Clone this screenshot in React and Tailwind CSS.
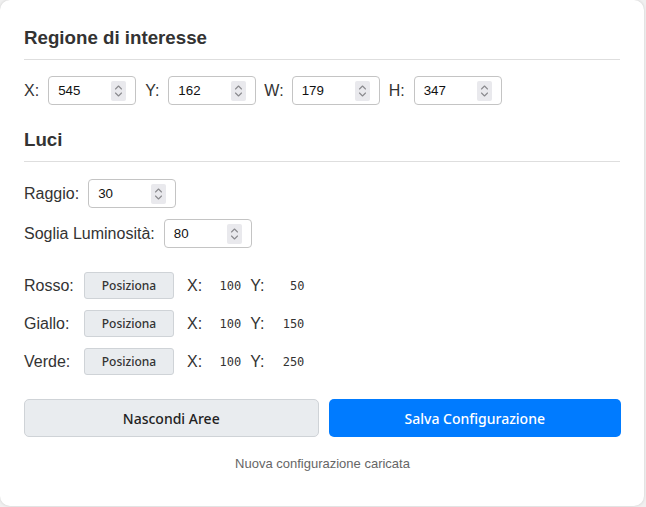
import React from "react";

function Spinner() {
  return (
    <div className="w-[15px] h-[20px] bg-[#e9e9ed] rounded-[2px] flex items-center justify-center">
      <svg width="9" height="14" viewBox="0 0 9 14" fill="none" stroke="#8a8a8e" strokeWidth="1.1" strokeLinecap="round" strokeLinejoin="round">
        <path d="M1.5 5 L4.5 2 L7.5 5" />
        <path d="M1.5 9 L4.5 12 L7.5 9" />
      </svg>
    </div>
  );
}

function NumInput({ value }) {
  return (
    <div className="w-[88px] h-[29px] border border-[#c4c4c4] rounded-[4px] flex items-center justify-between pl-[9px] pr-[9px] bg-white">
      <span className="text-[13.33px] text-[#111]" style={{ fontFamily: '"Liberation Sans", Arial, sans-serif' }}>{value}</span>
      <Spinner />
    </div>
  );
}

function Heading({ children }) {
  return (
    <div className="text-[18.72px] font-bold text-[#333] leading-[22px] pb-[10px] border-b border-[#dedede]">
      {children}
    </div>
  );
}

function LightRow({ label, x, y }) {
  return (
    <div className="flex items-center h-[27px]">
      <div className="w-[60px]">{label}</div>
      <button
        className="w-[90px] h-[27px] bg-[#e9ecef] border border-[#cfd3d7] rounded-[3px] text-[12px] font-medium text-[#333]"
        style={{ fontFamily: '"Noto Sans", sans-serif' }}
      >
        Posiziona
      </button>
      <span className="ml-[13px]">X:</span>
      <span className="w-[39px] text-right text-[12px] text-[#333]" style={{ fontFamily: '"DejaVu Sans Mono", monospace' }}>{x}</span>
      <span className="ml-[9px]">Y:</span>
      <span className="w-[40px] text-right text-[12px] text-[#333]" style={{ fontFamily: '"DejaVu Sans Mono", monospace' }}>{y}</span>
    </div>
  );
}

export default function App() {
  return (
    <div className="w-[646px] h-[507px] bg-[#f0f0f0] overflow-hidden">
      <div
        className="w-[644px] h-[506px] bg-white rounded-[10px] shadow-[0_0_3px_rgba(0,0,0,0.15)] px-[24px] pt-[27px] text-[16px] text-[#333]"
        style={{ fontFamily: '"Liberation Sans", Arial, sans-serif' }}
      >
        <Heading>Regione di interesse</Heading>
        <div className="flex items-center mt-[16px]">
          <span className="mr-[9px]">X:</span>
          <NumInput value="545" />
          <span className="ml-[9px] mr-[9px]">Y:</span>
          <NumInput value="162" />
          <span className="ml-[8px] mr-[8px]">W:</span>
          <NumInput value="179" />
          <span className="ml-[9px] mr-[9px]">H:</span>
          <NumInput value="347" />
        </div>

        <div className="mt-[24px]">
          <Heading>Luci</Heading>
        </div>
        <div className="flex flex-col gap-[11px] mt-[17px]">
          <div className="flex items-center">
            <span className="mr-[9px]">Raggio:</span>
            <NumInput value="30" />
          </div>
          <div className="flex items-center">
            <span className="mr-[9px]">Soglia Luminosità:</span>
            <NumInput value="80" />
          </div>
        </div>

        <div className="flex flex-col gap-[11px] mt-[24px]">
          <LightRow label="Rosso:" x="100" y="50" />
          <LightRow label="Giallo:" x="100" y="150" />
          <LightRow label="Verde:" x="100" y="250" />
        </div>

        <div className="flex gap-[10px] mt-[24px] w-[597px]">
          <button
            className="flex-1 h-[38px] bg-[#e9ecef] border border-[#cfd3d7] rounded-[5px] text-[14px] font-medium text-[#222]"
            style={{ fontFamily: '"Noto Sans", sans-serif' }}
          >
            Nascondi Aree
          </button>
          <button
            className="flex-1 h-[38px] bg-[#007bff] rounded-[5px] text-[14px] font-medium text-white"
            style={{ fontFamily: '"Noto Sans", sans-serif' }}
          >
            Salva Configurazione
          </button>
        </div>

        <div className="mt-[17px] text-center text-[13px] text-[#666] w-[597px]">
          Nuova configurazione caricata
        </div>
      </div>
    </div>
  );
}
